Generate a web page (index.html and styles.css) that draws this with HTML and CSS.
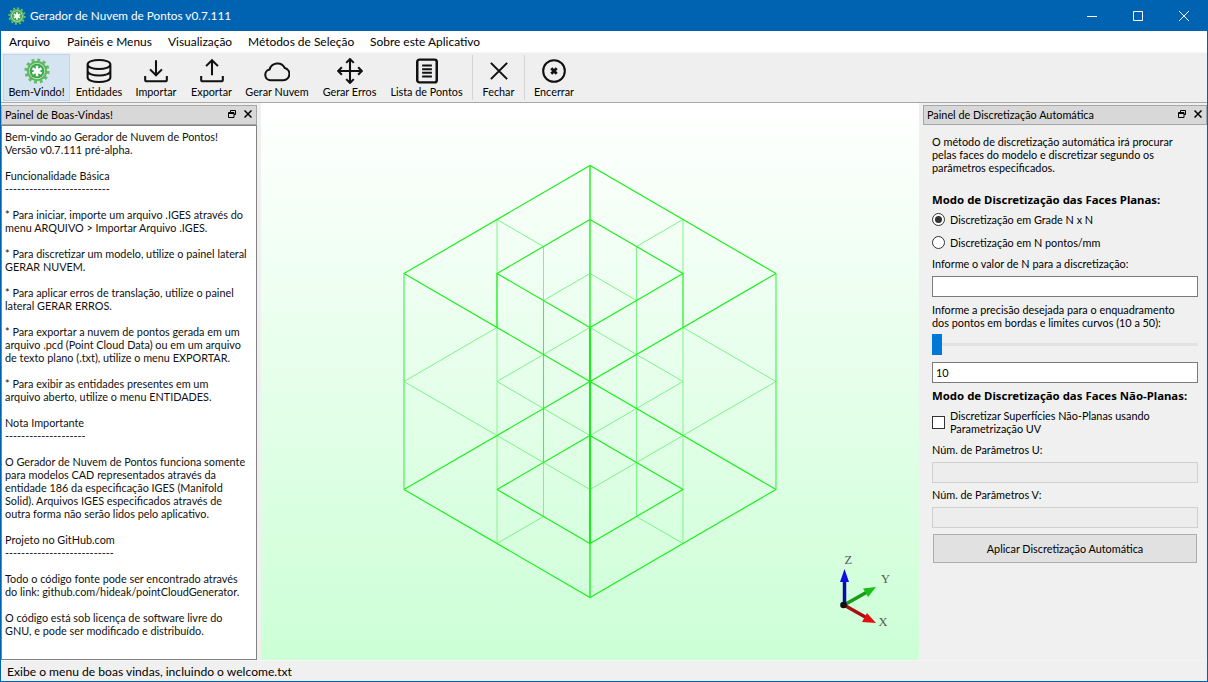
FILE: index.html
```html
<!DOCTYPE html>
<html lang="pt">
<head>
<meta charset="utf-8">
<title>Gerador de Nuvem de Pontos v0.7.111</title>
<link rel="stylesheet" href="styles.css">
</head>
<body>
<svg class="defs" width="0" height="0" aria-hidden="true">
  <symbol id="logo" viewBox="0 0 32 32">
    <circle cx="16" cy="16" r="13.500" fill="none" stroke="#66bb6a" stroke-width="4" stroke-dasharray="3.530 3.530"/>
    <circle cx="16" cy="16" r="12.500" fill="#5cb860"/>
    <circle cx="16" cy="16" r="10" fill="#c4e8c6"/>
    <circle cx="16" cy="16" r="9" fill="#3fa650"/>
    <path stroke="#fff" stroke-width="3" d="M16 9.500v13M10.400 12.800l11.200 6.400M21.600 12.800l-11.200 6.400"/>
  </symbol>
  <symbol id="float" viewBox="0 0 8 8">
    <path fill="none" stroke="#000" d="M2.500 2V.5h5v4H6M.5 2.500h5.500v5h-5.500zM.5 3.500h5.500"/>
  </symbol>
  <symbol id="x" viewBox="0 0 8 8">
    <path fill="none" stroke="#000" stroke-width="1.500" d="M.5.5l7 7M7.500.5l-7 7"/>
  </symbol>
</svg>

<div class="app">
  <header class="titlebar">
    <svg class="title-logo"><use href="#logo"/></svg>
    <span class="title-text">Gerador de Nuvem de Pontos v0.7.111</span>
    <div class="win-controls">
      <span class="win-btn"><svg width="12" height="12" viewBox="0 0 12 12"><path stroke="#fff" d="M1 6.500h10"/></svg></span>
      <span class="win-btn"><svg width="12" height="12" viewBox="0 0 12 12"><path fill="none" stroke="#fff" d="M1.500 1.500h9v9h-9z"/></svg></span>
      <span class="win-btn"><svg width="12" height="12" viewBox="0 0 12 12"><path stroke="#fff" d="M1 1l10 10M11 1L1 11"/></svg></span>
    </div>
  </header>

  <nav class="menubar">
    <span>Arquivo</span><span>Painéis e Menus</span><span>Visualização</span><span>Métodos de Seleção</span><span>Sobre este Aplicativo</span>
  </nav>

  <div class="toolbar">
    <div class="tool active">
      <svg class="tool-icon tool-logo"><use href="#logo"/></svg>
      <span>Bem-Vindo!</span>
    </div>
    <div class="tool">
      <svg class="tool-icon" viewBox="0 0 24 24"><path d="M1.500 6c0-5.500 21-5.500 21 0v12c0 5.500-21 5.500-21 0zM1.500 6c0 5.500 21 5.500 21 0M1.500 12c0 5.500 21 5.500 21 0"/></svg>
      <span>Entidades</span>
    </div>
    <div class="tool">
      <svg class="tool-icon" viewBox="0 0 24 24"><path d="M12 2v14M6.500 10.500L12 16l5.500-5.500M2 16.500V20a1.500 1.500 0 0 0 1.500 1.500h17A1.500 1.500 0 0 0 22 20v-3.500"/></svg>
      <span>Importar</span>
    </div>
    <div class="tool">
      <svg class="tool-icon" viewBox="0 0 24 24"><path d="M12 16V2M6.500 7.500L12 2l5.500 5.500M2 16.500V20a1.500 1.500 0 0 0 1.500 1.500h17A1.500 1.500 0 0 0 22 20v-3.500"/></svg>
      <span>Exportar</span>
    </div>
    <div class="tool">
      <svg class="tool-icon" viewBox="0 0 24 24"><path d="M6 20.500a5 5 0 0 1-.8-9.900 7.500 7.500 0 0 1 14-1.300A5.700 5.700 0 0 1 18 20.500z"/></svg>
      <span>Gerar Nuvem</span>
    </div>
    <div class="tool">
      <svg class="tool-icon" viewBox="0 0 24 24"><path d="M12 1v22M1 12h22M8.500 4.500L12 1l3.500 3.500M8.500 19.500L12 23l3.500-3.500M4.500 8.500L1 12l3.500 3.500M19.500 8.500L23 12l-3.500 3.500"/></svg>
      <span>Gerar Erros</span>
    </div>
    <div class="tool">
      <svg class="tool-icon" viewBox="0 0 24 24"><path class="doc-outline" d="M5 1.500h14a2 2 0 0 1 2 2v17a2 2 0 0 1-2 2H5a2 2 0 0 1-2-2v-17a2 2 0 0 1 2-2z"/><path d="M7.500 7h9M7.500 10.300h9M7.500 13.600h9M7.500 17h9"/></svg>
      <span>Lista de Pontos</span>
    </div>
    <i class="sep"></i>
    <div class="tool">
      <svg class="tool-icon" viewBox="0 0 24 24"><path d="M4.500 4.500l15 15M19.500 4.500l-15 15"/></svg>
      <span>Fechar</span>
    </div>
    <i class="sep"></i>
    <div class="tool tool-last">
      <svg class="tool-icon" viewBox="0 0 24 24"><circle cx="12" cy="12" r="10"/><path class="bold-x" d="M9.500 9.500l5 5M14.500 9.500l-5 5"/></svg>
      <span>Encerrar</span>
    </div>
  </div>

  <main class="workspace">
    <aside class="dock dock-left">
      <div class="dock-title">
        <span class="dock-name">Painel de Boas-Vindas!</span>
        <svg class="dock-ic"><use href="#float"/></svg>
        <svg class="dock-ic"><use href="#x"/></svg>
      </div>
      <div class="welcome">Bem-vindo ao Gerador de Nuvem de Pontos!
Versão v0.7.111 pré-alpha.

Funcionalidade Básica
--------------------------

* Para iniciar, importe um arquivo .IGES através do
menu ARQUIVO &gt; Importar Arquivo .IGES.

* Para discretizar um modelo, utilize o painel lateral
GERAR NUVEM.

* Para aplicar erros de translação, utilize o painel
lateral GERAR ERROS.

* Para exportar a nuvem de pontos gerada em um
arquivo .pcd (Point Cloud Data) ou em um arquivo
de texto plano (.txt), utilize o menu EXPORTAR.

* Para exibir as entidades presentes em um
arquivo aberto, utilize o menu ENTIDADES.

Nota Importante
--------------------

O Gerador de Nuvem de Pontos funciona somente
para modelos CAD representados através da
entidade 186 da especificação IGES (Manifold
Solid). Arquivos IGES especificados através de
outra forma não serão lidos pelo aplicativo.

Projeto no GitHub.com
---------------------------

Todo o código fonte pode ser encontrado através
do link: github.com/hideak/pointCloudGenerator.

O código está sob licença de software livre do
GNU, e pode ser modificado e distribuído.</div>
    </aside>

    <section class="viewport">
      <svg class="scene" viewBox="261 103 658 557">
        <g id="wire" transform="translate(590 381.500) scale(46.500 27)">
          <path class="w faint" d="M-2-6V6"/>
          <path class="w light" d="M2-2V6M2-6V-4M-1-5V-3M-1 3V5M1-5V5"/>
          <path class="w light" d="M-2-6L-1-5M2-6L1-5M-1-3L0-4L1-3M-4 0L-2-2M4 0L2-2M-2 0L-1-1L0-2L1-1L2 0M-4 0L-2 2L-1 3L0 4L1 3L2 2L4 0M-2 0L-1 1L0 2L1 1L2 0M-2 6L-1 5M2 6L1 5"/>
          <path class="w medium" d="M-4-4V4M4-4V4M-1-3V3"/>
          <path class="w strong" d="M-4-4L0-8L4-4M0-6L-2-4L0-2L2-4L0-6M-4-4L0 0L4-4M-2-4V-2M2-4V-2M-4 4L0 0L4 4M-2 4L0 2L2 4L0 6L-2 4M-4 4L0 8L4 4"/>
          <path class="w core" d="M0-8V8"/>
          <path class="w core-thick" d="M0-2V6"/>
        </g>
        <g class="triad">
          <path class="ax-y" d="M844 605L868 591.500"/>
          <path class="ax-y-head" d="M876 587L863 588.500 868 597z"/>
          <path class="ax-z" d="M844.500 605V578"/>
          <path class="ax-z-head" d="M844.500 569L840 582H849z"/>
          <path class="ax-x" d="M844 605L867 618"/>
          <path class="ax-x-head" d="M876 623L862 622 867 613z"/>
          <circle class="ax-o" cx="843.500" cy="605" r="3.300"/>
          <text x="844.500" y="564" class="ax-t">Z</text>
          <text x="881" y="583" class="ax-t">Y</text>
          <text x="878.500" y="626" class="ax-t">X</text>
        </g>
      </svg>
    </section>

    <aside class="dock dock-right">
      <div class="dock-title">
        <span class="dock-name">Painel de Discretização Automática</span>
        <svg class="dock-ic"><use href="#float"/></svg>
        <svg class="dock-ic"><use href="#x"/></svg>
      </div>
      <form class="form">
        <p class="txt m10">O método de discretização automática irá procurar<br>pelas faces do modelo e discretizar segundo os<br>parâmetros especificados.</p>
        <p class="txt heading m19">Modo de Discretização das Faces Planas:</p>
        <div class="opt m5"><span class="radio on"></span><span class="txt">Discretização em Grade N x N</span></div>
        <div class="opt m7"><span class="radio"></span><span class="txt">Discretização em N pontos/mm</span></div>
        <p class="txt m7">Informe o valor de N para a discretização:</p>
        <div class="field m6"></div>
        <p class="txt m6">Informe a precisão desejada para o enquadramento<br>dos pontos em bordas e limites curvos (10 a 50):</p>
        <div class="slider m4"><span class="thumb"></span></div>
        <div class="field m7">10</div>
        <p class="txt heading m6">Modo de Discretização das Faces Não-Planas:</p>
        <div class="opt opt-tall m7"><span class="check"></span><span class="txt">Discretizar Superfícies Não-Planas usando<br>Parametrização UV</span></div>
        <p class="txt m8">Núm. de Parâmetros U:</p>
        <div class="field off m6"></div>
        <p class="txt m5">Núm. de Parâmetros V:</p>
        <div class="field off m6"></div>
        <div class="btn m6">Aplicar Discretização Automática</div>
      </form>
    </aside>
  </main>

  <footer class="statusbar">Exibe o menu de boas vindas, incluindo o welcome.txt</footer>
</div>
</body>
</html>
```
FILE: styles.css
```css
* { box-sizing: border-box; }
html, body { margin: 0; height: 100%; overflow: hidden; }
body {
  background: #0063b1;
  font-family: Lato, "Noto Sans", sans-serif;
  font-size: 10.850px;
  color: #000;
}
.defs { position: absolute; }
.app {
  height: 681px;
  margin: 0 1px;
  display: flex;
  flex-direction: column;
  background: #f0f0f0;
}

.titlebar {
  height: 31px;
  margin: 0 -1px;
  background: #0063b1;
  color: #fff;
  display: flex;
  align-items: center;
  padding-left: 8px;
  flex: none;
}
.title-logo { width: 18px; height: 18px; margin-right: 4px; }
.title-text { font-size: 11.750px; flex: 1; }
.win-controls { display: flex; margin-right: 1px; }
.win-btn { width: 46px; height: 31px; display: flex; align-items: center; justify-content: center; }
.win-btn svg { display: block; }

.menubar {
  height: 21px;
  background: #fff;
  flex: none;
  display: grid;
  grid-template-columns: 58px 101px 80px 122px auto;
  padding-left: 8px;
  align-items: center;
  font-size: 11.950px;
  color: #000;
}

.toolbar {
  height: 51px;
  flex: none;
  background: #efefef;
  border-top: 1px solid #f8f8f8;
  border-bottom: 1px solid #a9a9a9;
  padding: 1px 0 1px 2px;
  display: flex;
}
.tool {
  width: 56px;
  display: flex;
  flex-direction: column;
  align-items: center;
  border: 1px solid transparent;
  padding-top: 3px;
  white-space: nowrap;
  line-height: 13px;
  font-size: 10.800px;
}
.tool:nth-child(1) { width: 67px; }
.tool:nth-child(2) { width: 58px; }
.tool:nth-child(3) { width: 56px; }
.tool:nth-child(4) { width: 55px; }
.tool:nth-child(5) { width: 76px; }
.tool:nth-child(6) { width: 69px; }
.tool:nth-child(7) { width: 85px; }
.tool:nth-child(9) { width: 45px; }
.tool-last { width: 52px; }
.tool.active { background: #d5e4f1; border-color: #bcd6ec; }
.tool-icon {
  width: 26px;
  height: 26px;
  fill: none;
  stroke: #111;
  stroke-width: 1.900;
  flex: none;
  margin-bottom: 1px;
}
.tool-logo { stroke: none; }
.bold-x { stroke-width: 2.600; }
.doc-outline { stroke-width: 2.300; }
.sep { width: 1px; margin: 1px 3px 1px 3px; background: #d4d4d4; flex: none; }

.workspace { flex: 1; min-height: 0; display: flex; }
.dock { display: flex; flex-direction: column; padding-top: 2px; flex: none; min-height: 0; }
.dock-left { width: 256px; margin-right: 4px; }
.dock-right { width: 287px; padding-left: 3px; margin-left: 1px; }
.dock-title {
  height: 20px;
  flex: none;
  background: #d8d8d8;
  border: 1px solid #a6a6a6;
  display: flex;
  align-items: center;
  padding: 0 4px 2px 3px;
  gap: 8px;
}
.dock-name { flex: 1; white-space: nowrap; }
.dock-ic { width: 8px; height: 8px; }
.welcome {
  flex: 1;
  min-height: 0;
  background: #fff;
  border: 1px solid #828282;
  padding: 4px 3px;
  line-height: 13px;
  white-space: pre;
  color: #111;
}
.viewport {
  flex: 1;
  background: linear-gradient(#fff, #ccffd6);
  min-width: 0;
}
.scene { display: block; width: 100%; height: 100%; }
.w { fill: none; vector-effect: non-scaling-stroke; }
.faint { stroke: #a6f7ac; stroke-width: 1.500; }
.light { stroke: #7cf586; stroke-width: 1; }
.medium { stroke: #3df04a; stroke-width: 1.100; }
.strong { stroke: #1ff01f; stroke-width: 1.200; }
.core { stroke: #1cf01f; stroke-width: 1.400; }
.core-thick { stroke: #0ef010; stroke-width: 1.800; }
.ax-x { stroke: #a81010; stroke-width: 3.500; }
.ax-y { stroke: #1a9a1a; stroke-width: 3.500; }
.ax-z { stroke: #0c0ca8; stroke-width: 3.500; }
.ax-x-head { fill: #e01010; }
.ax-y-head { fill: #18c018; }
.ax-z-head { fill: #1010e0; }
.ax-o { fill: #111; }
.ax-t { font-family: "Liberation Serif", serif; font-size: 12.500px; fill: #555; }

.form { display: flex; flex-direction: column; padding: 0 8px 0 9px; }
.txt { margin: 0; line-height: 13px; white-space: nowrap; }
.heading { font-family: "Noto Sans", sans-serif; font-size: 11.400px; font-weight: 700; }
.m4 { margin-top: 4px; }
.m5 { margin-top: 5px; }
.m6 { margin-top: 6px; }
.m7 { margin-top: 7px; }
.m8 { margin-top: 8px; }
.m10 { margin-top: 10px; }
.m19 { margin-top: 19px; }
.opt { height: 16px; display: flex; align-items: center; gap: 5px; }
.opt-tall { height: 26px; }
.radio {
  width: 13px;
  height: 13px;
  border: 1px solid #333;
  border-radius: 50%;
  background: #fff;
  flex: none;
  display: flex;
  align-items: center;
  justify-content: center;
}
.radio.on::after { content: ""; width: 7px; height: 7px; border-radius: 50%; background: #333; }
.check { width: 13px; height: 13px; border: 1px solid #333; background: #fff; flex: none; }
.field {
  height: 21px;
  border: 1px solid #7a7a7a;
  background: #fff;
  padding-left: 3px;
  line-height: 20px;
  width: 266px;
}
.field.off { background: #ededed; border-color: #cfcfcf; }
.slider { height: 22px; width: 266px; display: flex; align-items: center; background: linear-gradient(#e2e2e2, #e2e2e2) 0 50% / 100% 3px no-repeat; }
.thumb { width: 10px; height: 21px; background: #0078d7; }
.btn {
  height: 29px;
  width: 264px;
  margin-left: 1px;
  background: #e1e1e1;
  border: 1px solid #adadad;
  display: flex;
  align-items: center;
  justify-content: center;
}

.statusbar {
  height: 21px;
  flex: none;
  padding-left: 6px;
  display: flex;
  align-items: center;
  font-size: 12.100px;
  border-top: 1px solid #f4f4f4;
}
```
